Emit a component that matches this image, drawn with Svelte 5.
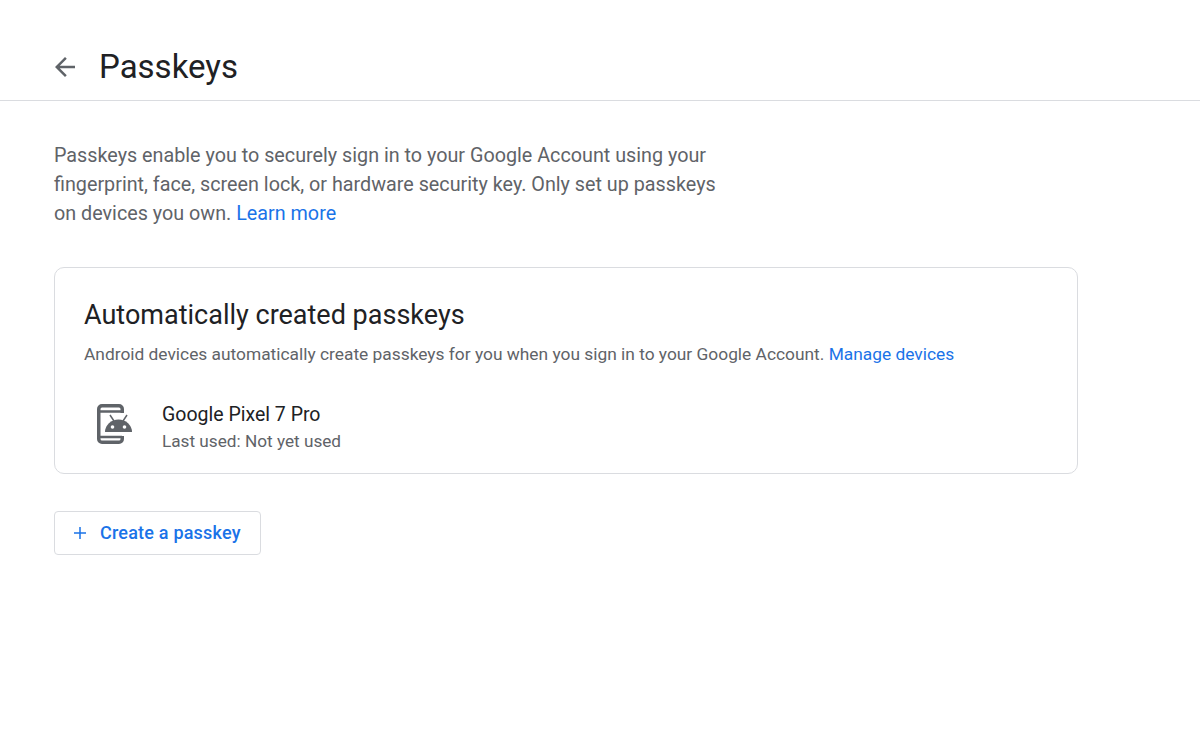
<script>
	const devices = [{ name: 'Google Pixel 7 Pro', used: 'Last used: Not yet used' }];
</script>

<style>
	:global(body) {
		background: #fff;
	}

	.page {
		font-family: Roboto, "Noto Sans", sans-serif;
		color: #5f6368;
	}

	.topbar {
		display: flex;
		align-items: center;
		height: 101px;
		box-sizing: border-box;
		padding: 33px 0 0 55px;
		gap: 24px;
		border-bottom: 1px solid #dadce0;
	}

	.back {
		width: 20px;
		height: 20px;
		display: block;
		fill: #5f6368;
	}

	h1 {
		margin: 0;
		font-size: 33px;
		font-weight: 400;
		line-height: 44px;
		color: #202124;
	}

	.content {
		padding: 40px 0 0 54px;
	}

	.intro {
		margin: 0;
		width: 680px;
		font-size: 19.75px;
		line-height: 29px;
	}

	a {
		color: #1a73e8;
		text-decoration: none;
	}

	.card {
		margin-top: 39px;
		width: 1024px;
		height: 207px;
		box-sizing: border-box;
		border: 1px solid #dadce0;
		border-radius: 10px;
		padding: 28px 30px 0 29px;
	}

	h2 {
		margin: 0;
		font-size: 27px;
		font-weight: 400;
		line-height: 38px;
		color: #202124;
	}

	.sub {
		margin: 8px 0 0;
		font-size: 17.35px;
		line-height: 24px;
	}

	.device {
		display: flex;
		align-items: flex-start;
		gap: 29px;
		margin-top: 35px;
		padding-left: 13px;
	}

	.device svg {
		width: 36px;
		height: 42px;
		margin-top: 3px;
		display: block;
		flex: none;
	}

	.name {
		font-size: 19.5px;
		line-height: 28px;
		color: #202124;
	}

	.used {
		font-size: 17.2px;
		line-height: 25px;
	}

	.create {
		display: flex;
		align-items: center;
		gap: 13px;
		margin-top: 37px;
		width: 207px;
		height: 44px;
		box-sizing: border-box;
		padding: 0 0 1px 18px;
		border: 1px solid #dadce0;
		border-radius: 4px;
		background: #fff;
		color: #1a73e8;
		font-family: inherit;
		font-size: 18px;
		font-weight: 500;
		letter-spacing: 0.2px;
	}

	.create svg {
		width: 14px;
		height: 14px;
		display: block;
	}
</style>

<div class="page">
	<header class="topbar">
		<svg class="back" viewBox="4 4 16 16"><path d="M20 11H7.830l5.590-5.590L12 4l-8 8 8 8 1.410-1.410L7.830 13H20z" /></svg>
		<h1>Passkeys</h1>
	</header>
	<main class="content">
		<p class="intro">Passkeys enable you to securely sign in to your Google Account using your fingerprint, face, screen lock, or hardware security key. Only set up passkeys on devices you own. <a href="#more">Learn more</a></p>
		<section class="card">
			<h2>Automatically created passkeys</h2>
			<p class="sub">Android devices automatically create passkeys for you when you sign in to your Google Account. <a href="#manage">Manage devices</a></p>
			{#each devices as device}
				<div class="device">
					<svg viewBox="0 0 36 42">
						<path d="M25.250 9V5a3.250 3.250 0 0 0-3.250-3.250H5A3.250 3.250 0 0 0 1.750 5v30A3.250 3.250 0 0 0 5 38.250h17a3.250 3.250 0 0 0 3.250-3.250v-3" fill="none" stroke="#5f6368" stroke-width="3.500" />
						<path d="M3 7.500h22M3 33h22" stroke="#5f6368" stroke-width="2.500" />
						<path d="M8 28a13.500 12.500 0 0 1 27 0z" fill="#5f6368" />
						<path d="M13 11l4 6M30 11l-4 6" stroke="#5f6368" stroke-width="1.500" />
						<circle cx="15.500" cy="23" r="1.800" fill="#fff" />
						<circle cx="27.500" cy="23" r="1.800" fill="#fff" />
					</svg>
					<div>
						<div class="name">{device.name}</div>
						<div class="used">{device.used}</div>
					</div>
				</div>
			{/each}
		</section>
		<button class="create">
			<svg viewBox="0 0 14 14"><path d="M7 1v12M1 7h12" stroke="#1a73e8" stroke-width="1.500" /></svg>
			Create a passkey
		</button>
	</main>
</div>
